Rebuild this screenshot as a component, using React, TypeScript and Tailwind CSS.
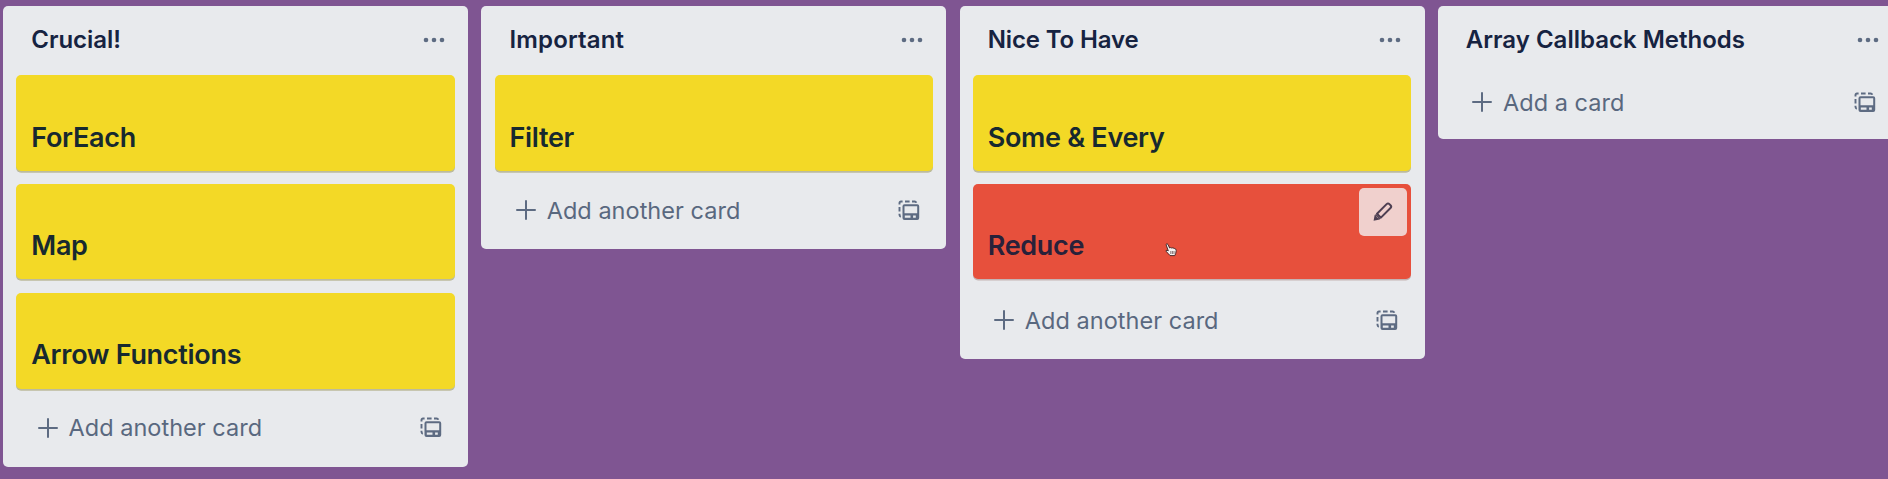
type Card = { title: string; color: "yellow" | "red"; size: string; editing?: boolean };
type List = { title: string; titleClass: string; cards: Card[]; add: string; addClass: string; height: string };

const lists: List[] = [
  {
    title: "Crucial!",
    titleClass: "tracking-[-0.05px]",
    height: "h-[461px]",
    add: "Add another card",
    addClass: "mt-[16.4px]",
    cards: [
      { title: "ForEach", color: "yellow", size: "h-[96px] pb-[13.5px]" },
      { title: "Map", color: "yellow", size: "h-[95px] pb-[13.5px]" },
      { title: "Arrow Functions", color: "yellow", size: "h-[96px] pb-[13.2px]" },
    ],
  },
  {
    title: "Important",
    titleClass: "tracking-[0.15px]",
    height: "h-[243px]",
    add: "Add another card",
    addClass: "mt-[16.3px]",
    cards: [{ title: "Filter", color: "yellow", size: "h-[96px] pb-[13.5px]" }],
  },
  {
    title: "Nice To Have",
    titleClass: "tracking-[-0.13px]",
    height: "h-[353px]",
    add: "Add another card",
    addClass: "mt-[18px]",
    cards: [
      { title: "Some & Every", color: "yellow", size: "h-[96px] pb-[13.5px]" },
      { title: "Reduce", color: "red", size: "h-[95px] pb-[13.5px]", editing: true },
    ],
  },
  {
    title: "Array Callback Methods",
    titleClass: "tracking-[0px]",
    height: "h-[133px]",
    add: "Add a card",
    addClass: "mt-[4.2px]",
    cards: [],
  },
];

function Dots() {
  return (
    <svg width="22" height="6" viewBox="0 0 22 6" fill="#5d6b82">
      <circle cx="3" cy="3" r="2.3" />
      <circle cx="11" cy="3" r="2.3" />
      <circle cx="19" cy="3" r="2.3" />
    </svg>
  );
}

function Plus() {
  return (
    <svg width="22" height="22" viewBox="0 0 22 22" stroke="#5d6b82" strokeWidth="2" strokeLinecap="round">
      <path d="M11 2V20M2 11H20" />
    </svg>
  );
}

function Template() {
  return (
    <svg width="22" height="21" viewBox="0 0 22 21" fill="none" stroke="#5d6b82" strokeWidth="2">
      <path
        d="M1.5 4.4V3Q1.5 1.500 3 1.500H4.600M7 1.500H11.600M14 1.500H16.600Q17.900 1.500 18.300 2.700M1.500 7V11.400M1.500 13.800V15Q1.600 16.300 2.800 16.800"
        strokeWidth="1.9"
      />
      <path
        d="M6.500 4.200H19.200Q21.200 4.200 21.200 6.200V18Q21.200 20 19.200 20H6.500Q4.500 20 4.500 18V6.200Q4.500 4.200 6.500 4.200ZM6.500 6.200V13.200H19.200V6.200ZM6.800 15.400V17.700H12.500V15.400ZM15.100 15.400V17.700H17.800V15.400Z"
        fill="#5d6b82"
        stroke="none"
        fillRule="evenodd"
      />
    </svg>
  );
}

function Pencil() {
  return (
    <svg width="22" height="22" viewBox="0 0 22 22" fill="none" stroke="#4e3f52" strokeWidth="2" strokeLinejoin="round">
      <path d="M5 12.700L14.600 3.100Q16 1.700 17.400 3.100L18.500 4.200Q19.900 5.600 18.500 7L8.900 16.600Z" />
      <path d="M1.600 19.800L2.700 13.800Q4.400 14.200 4.900 16.200Q7.200 16.800 7.700 18.600Z" fill="#4e3f52" stroke="none" />
      <path d="M3.600 13.400L8.200 18" strokeWidth="1.200" />
    </svg>
  );
}

function Hand() {
  return (
    <svg width="12" height="14" viewBox="0 0 12 14" className="absolute left-[192px] top-[58.5px]">
      <path
        d="M1 1.500Q2-.200 3 1.500L4.600 5Q5.500 4.200 6.300 5Q7.300 4.300 8 5.200Q9.200 4.600 9.800 5.800Q11.400 5.800 11.200 7.600Q11 10.500 9.800 12.600H5Q3.800 10.800 1.200 8.600Q.400 7.300 2 7.200L3.300 7.800Z"
        fill="#f6f3f2"
        stroke="#3a1f20"
        strokeWidth="0.9"
      />
      <path d="M5.800 8V11M7.400 8V11M9 8V11" stroke="#3a1f20" strokeWidth="0.600" />
    </svg>
  );
}

function CardTile({ card }: { card: Card }) {
  return (
    <div
      className={`relative flex items-end rounded-[5px] pl-[14.8px] ${card.size} ${
        card.color === "red" ? "bg-[#e7503c] shadow-[0_1.5px_0_#c4b4b4]" : "bg-[#f3d926] shadow-[0_1.7px_0_#bcbb9c]"
      }`}
    >
      <span
        className={`whitespace-nowrap text-[27px] font-semibold leading-[40px] tracking-[-0.3px] ${
          card.color === "red" ? "text-[#28213a]" : "text-[#17292f]"
        }`}
      >
        {card.title}
      </span>
      {card.editing && (
        <>
          <button className="absolute right-[4px] top-[4px] flex size-[48px] items-center justify-center rounded-[5px] bg-[#f0d0cd]">
            <Pencil />
          </button>
          <Hand />
        </>
      )}
    </div>
  );
}

export default function App() {
  return (
    <main className="flex h-[479px] w-[1888px] items-start gap-[13.2px] overflow-hidden bg-[#7f5592] pl-[3.2px] pt-[6px] font-['Inter',sans-serif]">
      {lists.map((list) => (
        <section key={list.title} className={`w-[465px] shrink-0 rounded-[5px] bg-[#e8eaed] px-[13.3px] ${list.height}`}>
          <header className="flex h-[69px] items-start justify-between pl-[14.8px] pr-[10px] pt-[14px]">
            <h2 className={`whitespace-nowrap text-[24px] font-semibold leading-[40px] text-[#162341] ${list.titleClass}`}>
              {list.title}
            </h2>
            <div className="flex h-[40px] items-center">
              <Dots />
            </div>
          </header>
          <div className="flex flex-col gap-[13.3px]">
            {list.cards.map((card) => (
              <CardTile key={card.title} card={card} />
            ))}
          </div>
          <footer className={`flex h-[46px] items-center pl-[20.4px] pr-[13px] ${list.addClass}`}>
            <Plus />
            <span className="ml-[9.6px] flex-1 whitespace-nowrap text-[23.5px] tracking-[0.03px] text-[#59687f]">
              {list.add}
            </span>
            <Template />
          </footer>
        </section>
      ))}
    </main>
  );
}
